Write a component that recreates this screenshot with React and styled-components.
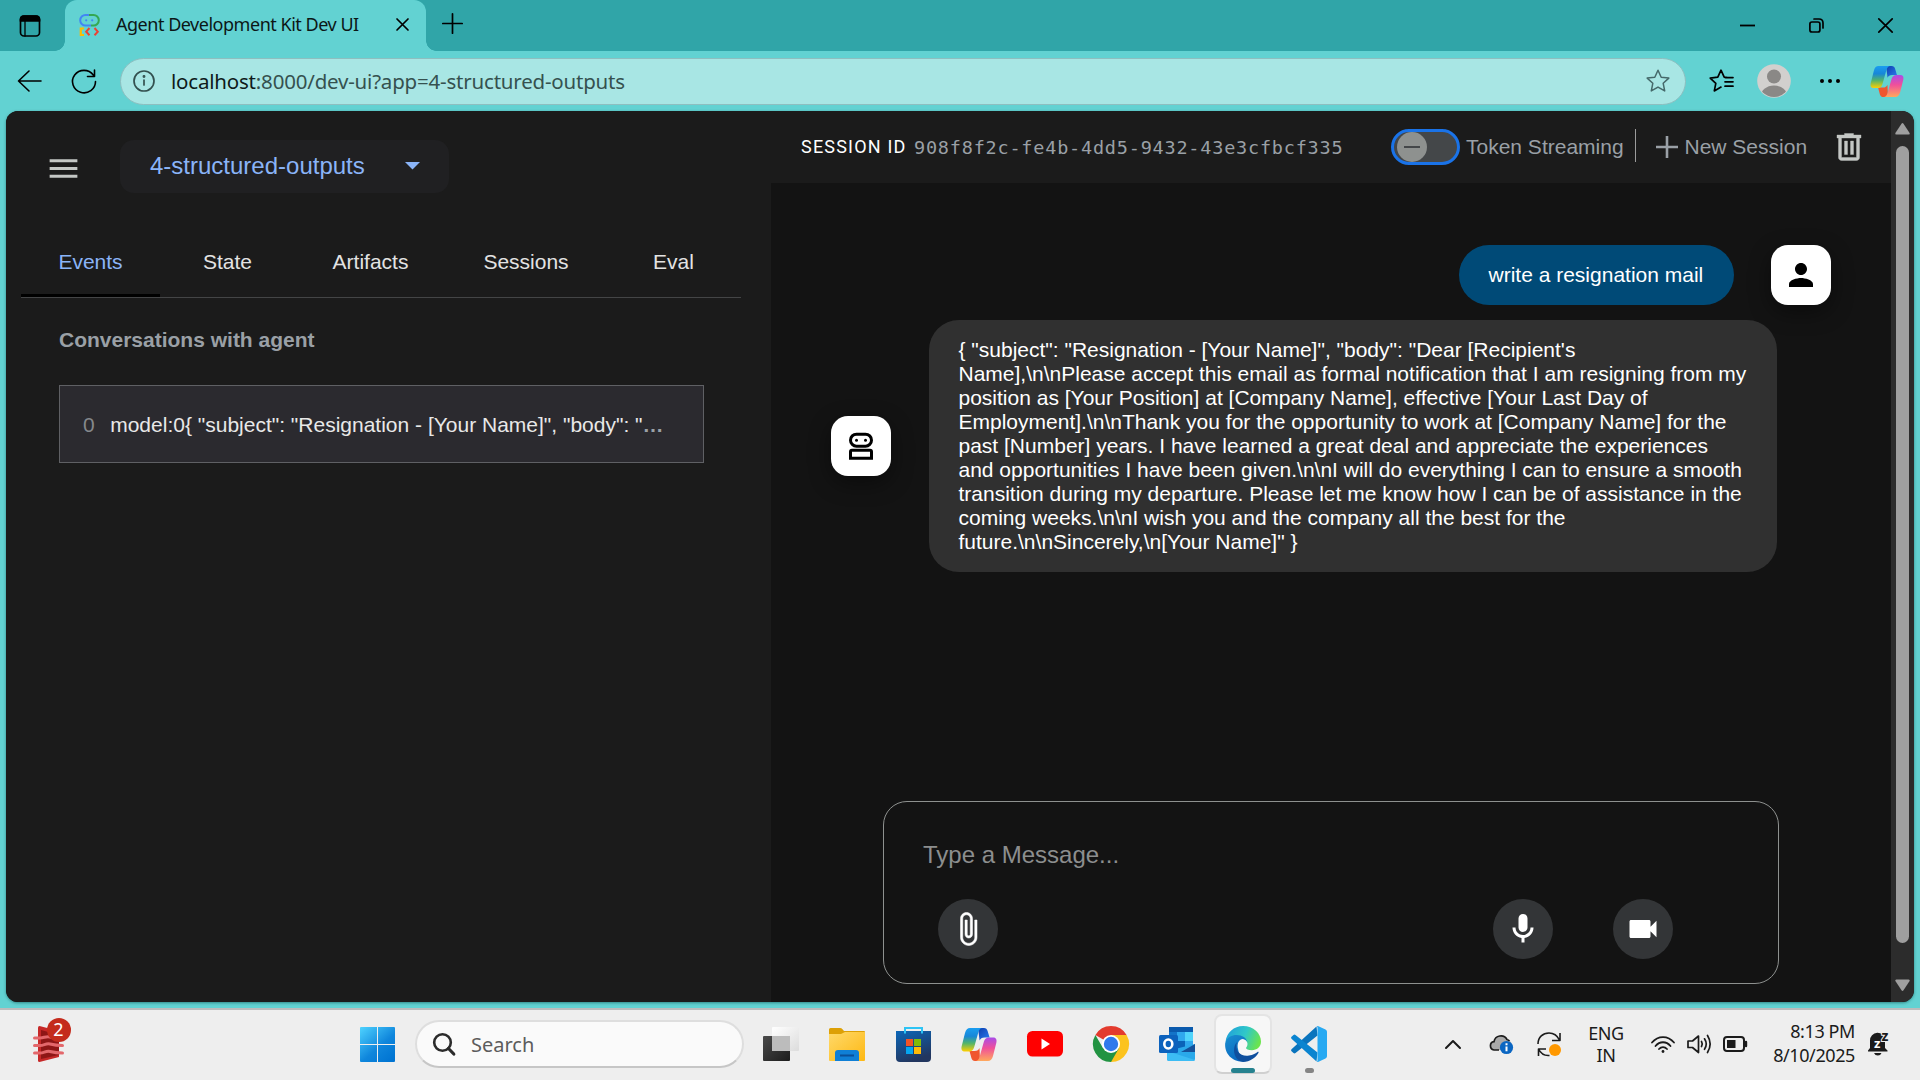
import React from "react";
import styled, { createGlobalStyle, css } from "styled-components";

const Global = createGlobalStyle`
  * { box-sizing: border-box; }
  html, body { margin: 0; padding: 0; }
  body { width: 1920px; height: 1080px; overflow: hidden; background: #62d2d2; }
  svg { display: block; flex: none; overflow: visible; }
`;

const ui = `"Noto Sans", "Open Sans", sans-serif`;
const arial = `"Liberation Sans", Arial, sans-serif`;

const Screen = styled.div`
  width: 1920px;
  height: 1080px;
  display: flex;
  flex-direction: column;
  background: #62d2d2;
  font-family: ${arial};
`;

/* ---------- browser chrome ---------- */
const TabStrip = styled.div`
  height: 51px;
  flex: none;
  display: flex;
  align-items: center;
  background: #30a5a8;
  padding: 0 27px 0 19px;
`;
const Tab = styled.div`
  position: relative;
  display: flex;
  align-items: center;
  width: 361px;
  height: 51px;
  margin-left: 24px;
  padding: 0 17px 2px 14px;
  background: #62d2d2;
  border-radius: 12px 12px 0 0;
  &::before, &::after {
    content: "";
    position: absolute;
    bottom: 0;
    width: 10px;
    height: 10px;
  }
  &::before { left: -10px; background: radial-gradient(circle at 0 0, transparent 9.5px, #62d2d2 10px); }
  &::after { right: -10px; background: radial-gradient(circle at 100% 0, transparent 9.5px, #62d2d2 10px); }
`;
const TabTitle = styled.span`
  flex: 1;
  margin: 0 0 2px 16px;
  font: 400 18px/24px ${ui};
  letter-spacing: -0.48px;
  color: #0c1717;
  white-space: nowrap;
`;
const NewTab = styled.div`
  margin: 0 auto 4px 16px;
`;
const WindowButtons = styled.div`
  display: flex;
  gap: 54px;
`;
const Toolbar = styled.div`
  height: 60px;
  flex: none;
  display: flex;
  align-items: center;
  padding: 0 16px 0 17px;
`;
const Reload = styled.div`
  margin: 0 23px 0 29px;
`;
const AddressBar = styled.div`
  display: flex;
  align-items: center;
  width: 1566px;
  height: 47px;
  padding: 0 15px 0 12px;
  border: 1px solid #8dbfc0;
  border-radius: 24px;
  background: #a8e6e4;
`;
const Url = styled.span`
  flex: 1;
  margin: 0 0 1px 16px;
  font: 400 20.5px/28px ${ui};
  letter-spacing: -0.2px;
  color: #35514f;
  white-space: nowrap;
  b { font-weight: 400; color: #0e1a1a; }
`;
const ToolIcons = styled.div`
  flex: 1;
  display: flex;
  align-items: center;
  justify-content: space-between;
  margin-left: 23px;
  & > :nth-child(2) { margin: 0 2px 0 -3px; }
  & > :nth-child(3) { margin: 0 4px 0 0; }
`;

/* ---------- page ---------- */
const Page = styled.div`
  height: 891px;
  flex: none;
  margin: 0 6px;
  display: flex;
  border-radius: 12px;
  overflow: hidden;
  background: #131313;
  box-shadow: 0 1px 3px rgba(0, 60, 60, 0.5);
`;
const SidePanel = styled.aside`
  width: 765px;
  flex: none;
  background: #1b1b1b;
`;
const SideTop = styled.div`
  display: flex;
  align-items: center;
  height: 110px;
  padding: 0 0 0 39px;
  & > svg { margin-top: 4px; }
`;
const AppSelect = styled.div`
  display: flex;
  align-items: center;
  justify-content: space-between;
  width: 329px;
  height: 53px;
  margin-left: 38px;
  padding: 0 29px 0 30px;
  border-radius: 14px;
  background: #202022;
  color: #8ab4f8;
  font-size: 24px;
`;
const Tabs = styled.nav`
  display: flex;
  height: 77px;
  margin-left: 15px;
  width: 720px;
  border-bottom: 1px solid #444546;
`;
const TabItem = styled.div`
  width: ${(p) => p.$w}px;
  height: 76px;
  padding: 29px 0 0;
  text-align: center;
  font-size: 21px;
  line-height: 24px;
  color: ${(p) => (p.$active ? "#8ab4f8" : "#e3e3e3")};
  border-bottom: 3px solid ${(p) => (p.$active ? "#000" : "transparent")};
`;
const SectionTitle = styled.h2`
  margin: 30px 0 0 53px;
  font-size: 21px;
  line-height: 24px;
  font-weight: 700;
  color: #9aa0a6;
`;
const EventRow = styled.div`
  display: flex;
  align-items: center;
  width: 645px;
  height: 78px;
  margin: 33px 0 0 53px;
  padding: 1px 23px 0;
  gap: 15.5px;
  border: 1px solid #5f6064;
  background: #2b2a2f;
  font-size: 21px;
  color: #85888c;
  white-space: nowrap;
  span { color: #e8e8e8; }
  i { font-style: normal; font-weight: 700; color: #9aa0a6; }
`;
const Main = styled.main`
  width: 1120px;
  flex: none;
  display: flex;
  flex-direction: column;
`;
const SessionBar = styled.header`
  display: flex;
  align-items: center;
  height: 72px;
  padding: 0 24px 0 30px;
  background: #1b1b1b;
  color: #9aa0a6;
  font-size: 21px;
`;
const SessionLabel = styled.span`
  font: 400 18px/24px Roboto, sans-serif;
  letter-spacing: 1.2px;
  color: #fff;
  white-space: nowrap;
  width: 113px;
`;
const SessionId = styled.span`
  width: 477px;
  margin-top: 1px;
  font: 400 18.5px/24px "DejaVu Sans Mono", monospace;
  letter-spacing: 0.79px;
`;
const Toggle = styled.div`
  width: 69px;
  height: 36px;
  border: 3px solid #1a73e8;
  border-radius: 18px;
  background: #444749;
  padding-left: 3px;
`;
const Knob = styled.div`
  display: flex;
  align-items: center;
  justify-content: center;
  width: 30px;
  height: 30px;
  border-radius: 50%;
  background: #8e918f;
  &::after { content: ""; width: 16px; height: 2px; background: #444749; }
`;
const BarText = styled.span`
  width: ${(p) => p.$w}px;
  margin-left: ${(p) => p.$ml}px;
  white-space: nowrap;
`;
const Divider = styled.div`
  width: 1px;
  height: 33px;
  background: #9b9b9b;
  margin: 0 20px 3px 10px;
`;
const TrashWrap = styled.div`
  margin-left: auto;
`;
const Chat = styled.section`
  flex: 1;
  display: flex;
  flex-direction: column;
  padding-top: 62px;
`;
const MessageRow = styled.div`
  display: flex;
  align-items: center;
  ${(p) =>
    p.$user
      ? css`gap: 37px; justify-content: flex-end; padding-right: 60px;`
      : css`gap: 38px; padding-left: 60px; margin-top: 15px;`}
`;
const Avatar = styled.div`
  display: flex;
  align-items: center;
  justify-content: center;
  width: 60px;
  height: 60px;
  flex: none;
  border-radius: 17px;
  background: #fff;
  box-shadow: 0 7px 22px rgba(0, 0, 0, 0.42);
`;
const Bubble = styled.div`
  border-radius: 30px;
  padding: 18px 29.5px;
  font-size: 21px;
  line-height: 24px;
  color: #fff;
  white-space: nowrap;
  background: ${(p) => (p.$user ? "#004a77" : "#303030")};
  width: ${(p) => p.$w}px;
`;
const Composer = styled.div`
  width: 896px;
  height: 183px;
  margin: auto 0 18px 112px;
  border: 1px solid #8e918f;
  border-radius: 24px;
  padding: 39px 105px 0 39px;
`;
const Placeholder = styled.div`
  font-size: 24px;
  line-height: 28px;
  color: #8c8e8e;
`;
const ComposerActions = styled.div`
  display: flex;
  align-items: center;
  gap: 60px;
  margin: 30px 0 0 15px;
`;
const RoundButton = styled.div`
  display: flex;
  align-items: center;
  justify-content: center;
  width: 60px;
  height: 60px;
  border-radius: 50%;
  background: #333537;
  margin-right: ${(p) => (p.$push ? "auto" : 0)};
`;
const ScrollBar = styled.div`
  width: 23px;
  display: flex;
  flex-direction: column;
  align-items: center;
  justify-content: space-between;
  padding: 12px 0 11px;
  background: #2c2c2c;
`;
const Thumb = styled.div`
  width: 13px;
  height: 797px;
  margin-bottom: 26px;
  border-radius: 7px;
  background: #9f9f9f;
`;

/* ---------- taskbar ---------- */
const Taskbar = styled.footer`
  height: 72px;
  margin-top: 6px;
  padding-bottom: 2px;
  flex: none;
  display: flex;
  align-items: center;
  border-top: 2px solid #bcbcbc;
  background: #eeeeee;
  font-family: ${ui};
  color: #1b1b1b;
`;
const Widget = styled.div`
  position: relative;
  width: 31px;
  margin: 0 296px 1px 33px;
`;
const Badge = styled.div`
  position: absolute;
  left: 13.5px;
  top: -8px;
  width: 24px;
  height: 24px;
  border-radius: 50%;
  background: #c42b1c;
  color: #fff;
  font: 400 18px/23px ${ui};
  text-align: center;
`;
const SearchBox = styled.div`
  display: flex;
  align-items: center;
  width: 329px;
  height: 48px;
  margin: 0 4px 0 20px;
  padding: 1px 0 0 16px;
  gap: 16px;
  border: 2px solid #dedede;
  border-bottom-color: #c6c6c6;
  border-radius: 24px;
  background: #fafafa;
  font: 400 20px/28px ${ui};
  color: #5c5c5c;
`;
const AppSlot = styled.div`
  position: relative;
  width: 66px;
  height: 70px;
  display: flex;
  align-items: center;
  justify-content: center;
`;
const ActiveTile = styled.div`
  display: flex;
  align-items: center;
  justify-content: center;
  width: 58px;
  height: 60px;
  border: 2px solid #e4e4e4;
  border-bottom-color: #d0d0d0;
  border-radius: 8px;
  background: #f7f7f7;
`;
const Indicator = styled.div`
  position: absolute;
  bottom: 6px;
  left: calc(50% - ${(p) => p.$w / 2}px);
  width: ${(p) => p.$w}px;
  height: 5px;
  border-radius: 3px;
  background: ${(p) => p.$c};
`;
const Tray = styled.div`
  flex: 1;
  display: flex;
  align-items: center;
  margin-left: 103px;
`;
const TrayItem = styled.div`
  margin-right: ${(p) => p.$mr}px;
`;
const Lang = styled.div`
  width: 36px;
  margin-right: 27px;
  font-size: 18px;
  line-height: 22.5px;
  letter-spacing: -0.4px;
  text-align: center;
`;
const Clock = styled.div`
  width: 108px;
  margin-bottom: 2px;
  font-size: 18px;
  line-height: 24px;
  letter-spacing: -0.4px;
  text-align: right;
  white-space: nowrap;
`;
const BellWrap = styled.div`
  margin-left: 13px;
`;

/* ---------- icons ---------- */
const Stroke = ({ w, h, vb, c = "#000", sw = 1.6, children, cap = "round" }) => (
  <svg width={w} height={h} viewBox={vb || `0 0 ${w} ${h}`} fill="none" stroke={c} strokeWidth={sw} strokeLinecap={cap} strokeLinejoin="round">
    {children}
  </svg>
);
const Mat = ({ d, size = 36, c = "#fff", bold = 0 }) => (
  <svg width={size} height={size} viewBox="0 0 24 24" fill={c} stroke={c} strokeWidth={bold}><path d={d} /></svg>
);

const AdkLogo = () => (
  <svg width="21" height="22" viewBox="0 0 21 22" fill="none" strokeWidth="2">
    <path d="M10 1H6.500a5.300 5.300 0 0 0 0 10.600H12" stroke="#4285f4" />
    <path d="M10 1h4.500a5.300 5.300 0 0 1 0 10.600H12" stroke="#34a853" />
    <circle cx="7.200" cy="6.300" r="1.100" fill="#4285f4" />
    <circle cx="13.200" cy="6.300" r="1.100" fill="#4285f4" />
    <path d="M5 14.500H1.800V21H5" stroke="#fbbc04" strokeWidth="2.200" />
    <path d="M10.500 14l-3.300 3.700 3.300 3.600" stroke="#ea4335" />
    <path d="M15.500 14l3.300 3.700-3.300 3.600" stroke="#ea4335" />
  </svg>
);

const Copilot = ({ w, h, id }) => (
  <svg width={w} height={h} viewBox="0 0 36 33">
    <defs>
      <linearGradient id={id + "a"} x1="0" y1="0" x2="0" y2="1">
        <stop offset="0" stopColor="#1a9df0" /><stop offset=".35" stopColor="#1787d8" /><stop offset=".65" stopColor="#52b46b" /><stop offset="1" stopColor="#ffd000" />
      </linearGradient>
      <linearGradient id={id + "b"} x1="0" y1="0" x2="0" y2="1">
        <stop offset="0" stopColor="#a94be8" /><stop offset=".45" stopColor="#f0509a" /><stop offset="1" stopColor="#ffa95c" />
      </linearGradient>
      <linearGradient id={id + "c"} x1="0" y1="0" x2="1" y2="1">
        <stop offset="0" stopColor="#0f3fae" /><stop offset="1" stopColor="#2a7cf0" />
      </linearGradient>
    </defs>
    <path d="M17 0h6c2 0 3 1 3.600 3l2 6.500h-5c-3 0-4 1-5 3z" fill={`url(#${id}c)`} />
    <path d="M19 33h-5c-2 0-3-1-3.600-3L8.500 23h5c3 0 4-1 5-3z" fill="#f0562f" />
    <path d="M9 0h12c-2 .5-3 2-3.700 4.500L13.500 18c-1 3.800-2.500 5.500-6 5.500H4C1 23.500 0 21.500.6 18.500L4 5C5 1.500 6.500 0 9 0z" fill={`url(#${id}a)`} />
    <path d="M27 33H15c2-.5 3-2 3.700-4.500L22.500 15c1-3.800 2.500-5.500 6-5.500H32c3 0 4 2 3.400 5L32 28c-1 3.500-2.500 5-5 5z" fill={`url(#${id}b)`} />
  </svg>
);

const Folder = () => (
  <svg width="36" height="33" viewBox="0 0 36 33">
    <defs><linearGradient id="fo" x1="0" y1="0" x2="1" y2="1"><stop offset="0" stopColor="#ffd96a" /><stop offset="1" stopColor="#fdb813" /></linearGradient></defs>
    <path d="M0 1.500Q0 0 1.500 0H11q1.500 0 2.500 1.200L15 3h20q1 0 1 1v5H0z" fill="#dda006" />
    <path d="M0 6h12l4-2h20v28q0 1-1 1H1q-1 0-1-1z" fill="url(#fo)" />
    <path d="M6 33v-8q0-3 3-3h18q3 0 3 3v8z" fill="#0f7fd6" />
    <path d="M11 27.500h14" stroke="#0a4f98" strokeWidth="2" />
  </svg>
);
const Store = () => (
  <svg width="35" height="35" viewBox="0 0 35 35">
    <defs><linearGradient id="st" x1="0" y1="0" x2=".4" y2="1"><stop offset="0" stopColor="#0b66b8" /><stop offset="1" stopColor="#22365f" /></linearGradient></defs>
    <path d="M0 4h35v27q0 4-4 4H4q-4 0-4-4z" fill="url(#st)" />
    <path d="M9 6.500V1h17v5.500" fill="none" stroke="#2dc4f5" strokeWidth="2" />
    <path d="M10 12h7v7h-7z" fill="#f35325" /><path d="M18 12h7v7h-7z" fill="#81bc06" />
    <path d="M10 20h7v7h-7z" fill="#05a6f0" /><path d="M18 20h7v7h-7z" fill="#ffba08" />
  </svg>
);
const TaskView = () => (
  <svg width="36" height="34" viewBox="0 0 36 34">
    <defs>
      <linearGradient id="tv" x1="0" y1="0" x2="1" y2="1"><stop offset="0" stopColor="#4a4a4a" /><stop offset="1" stopColor="#1c1c1c" /></linearGradient>
      <linearGradient id="tw" x1="0" y1="0" x2="1" y2="1"><stop offset="0" stopColor="#fff" /><stop offset="1" stopColor="#dcdcdc" /></linearGradient>
    </defs>
    <rect x="9" y="0" width="27" height="24" rx="1" fill="url(#tw)" />
    <rect x="0" y="9" width="27" height="25" rx="1" fill="url(#tv)" />
    <path d="M9 9h18v15H9z" fill="#bcbcbc" />
  </svg>
);
const Youtube = () => (
  <svg width="36" height="26" viewBox="0 0 36 26"><rect width="36" height="25.500" rx="5.500" fill="#f00" /><path d="M14.500 7.500v11l8.500-5.500z" fill="#fff" /></svg>
);
const Chrome = () => (
  <svg width="36" height="36" viewBox="0 0 36 36">
    <path d="M18 18L2.400 9A18 18 0 0 1 33.600 9z" fill="#e33b2e" />
    <path d="M18 18V9h15.600A18 18 0 0 1 18 36z" fill="#fcc31e" />
    <path d="M2.400 9l7.800 13.500L18 18l7.800 4.500L18 36A18 18 0 0 1 2.400 9z" fill="#229342" />
    <circle cx="18" cy="18" r="9" fill="#fff" /><circle cx="18" cy="18" r="7.200" fill="#3079ec" />
  </svg>
);
const Outlook = () => (
  <svg width="36" height="34" viewBox="0 0 36 34">
    <path d="M10 0h24v24H10z" fill="#1373c8" /><path d="M10 0h24v5H10z" fill="#0a5aad" />
    <path d="M18 5h8v9h-8z" fill="#2fa8ee" /><path d="M26 5h8v9h-8z" fill="#50d4fb" />
    <path d="M18 14h8v8h-8z" fill="#0a63b8" /><path d="M26 14h8v8h-8z" fill="#2fa8ee" />
    <path d="M8 24l28-7v15q0 2-2 2H10q-2 0-2-2z" fill="#2aa9ea" /><path d="M36 17v8l-14 0z" fill="#155099" />
    <path d="M8 24l28 9q-1 1-2 1H10q-2 0-2-2z" fill="#3cbcf4" />
    <rect x="0" y="8" width="19" height="18" rx="1.500" fill="#0c62bd" />
    <ellipse cx="9.300" cy="17" rx="4" ry="4.500" fill="none" stroke="#fff" strokeWidth="2.600" />
  </svg>
);
const Edge = () => (
  <svg width="36" height="36" viewBox="0 0 36 36">
    <defs>
      <linearGradient id="e1" x1="0" y1=".2" x2="1" y2=".5"><stop offset="0" stopColor="#1f9fdc" /><stop offset=".55" stopColor="#30c8c8" /><stop offset="1" stopColor="#6be44e" /></linearGradient>
      <linearGradient id="e2" x1="0" y1="0" x2=".5" y2="1"><stop offset="0" stopColor="#1a8fd0" /><stop offset="1" stopColor="#0a68c0" /></linearGradient>
    </defs>
    <path d="M.5 16C1.500 6.500 9 0 18 0c10.500 0 18 7.500 18 15.500 0 5.500-4.500 8.700-9 8.700-4 0-6-1.200-6-2.200 0-.8 1.500-1.500 1.500-4 0-3-2.500-5.500-6-5.500C9 12.500 3 13 .5 16z" fill="url(#e1)" />
    <path d="M.2 17C2 11 7 9 11.500 9c6 0 10 3 10.800 7-1-2-3-3-5-3-4 1-5.300 5-4.300 10 1 7 6 10 9 11.800C11 38-1 30 .2 17z" fill="url(#e2)" />
    <path d="M12 16c-3 9 4 15 12 13.500 4-.5 7-2.500 8.500-3.500.8-.4 1.300.2 1 .8C31 31.500 25 36 18 36c-5-.5-9-6-9-11.500 0-4 1.500-7 3-8.500z" fill="#0f4f9e" />
  </svg>
);
const VsCode = () => (
  <svg width="36" height="36" viewBox="0 0 36 36">
    <path d="M26.500 9.500L4.500 27q-1 .8-2 0L.5 25.200q-1-.9 0-1.900L25.500.5z" fill="#0a74bd" />
    <path d="M26.500 26.500L4.500 9q-1-.8-2 0L.5 10.800q-1 .9 0 1.900L25.500 35.500z" fill="#0a84d0" />
    <path d="M25.500.3Q26.500-.3 27.500.2l7 3.300q1.500.7 1.500 2.300v24.400q0 1.600-1.500 2.300l-7 3.300q-1 .5-2-.1 1 .3 1-1.500V1.800Q26.500 0 25.500.3z" fill="#27a9f2" />
  </svg>
);
const WinLogo = () => (
  <svg width="35" height="35" viewBox="0 0 35 35">
    <defs><linearGradient id="wl" gradientUnits="userSpaceOnUse" x1="0" y1="0" x2="30" y2="35"><stop offset="0" stopColor="#4fd3ff" /><stop offset=".6" stopColor="#0f86dc" /><stop offset="1" stopColor="#0074d2" /></linearGradient></defs>
    <path d="M0 1q0-1 1-1h16v17H0zM18 0h16q1 0 1 1v16H18zM0 18h17v17H1q-1 0-1-1zM18 18h17v16q0 1-1 1H18z" fill="url(#wl)" />
  </svg>
);
const WidgetIcon = () => (
  <svg width="31" height="36" viewBox="0 0 31 36">
    <path d="M5 1.500Q5 0 6.500 0L26 5v26L6.500 36Q5 36 5 34.500z" fill="#c62828" />
    <path d="M8 4l18 5v20L8 33z" fill="#8e1616" />
    <path d="M1.500 12H7c4 0 6-2 10-1s8 1 12 1M1.500 19.500H7c4 0 6-2.500 10-1.500s8 1.500 12.500 1.500M1.500 27H7c4 0 6-2.500 10-1.500s8 1.500 12.500 1.500" stroke="#e3676b" strokeWidth="3" fill="none" strokeLinecap="round" />
  </svg>
);

const LINES = [
  `{ "subject": "Resignation - [Your Name]", "body": "Dear [Recipient's`,
  `Name],\\n\\nPlease accept this email as formal notification that I am resigning from my`,
  `position as [Your Position] at [Company Name], effective [Your Last Day of`,
  `Employment].\\n\\nThank you for the opportunity to work at [Company Name] for the`,
  `past [Number] years. I have learned a great deal and appreciate the experiences`,
  `and opportunities I have been given.\\n\\nI will do everything I can to ensure a smooth`,
  `transition during my departure. Please let me know how I can be of assistance in the`,
  `coming weeks.\\n\\nI wish you and the company all the best for the`,
  `future.\\n\\nSincerely,\\n[Your Name]" }`,
];

const TABS = [["Events", 139], ["State", 135], ["Artifacts", 151], ["Sessions", 160], ["Eval", 135]];
const STAR = "M12 1.200l3.200 7 7.600.9-5.600 5.200 1.500 7.600L12 18.100l-6.700 3.800 1.500-7.600L1.200 9.100l7.600-.9z";

export default function App() {
  return (
    <Screen>
      <Global />
      <TabStrip>
        <Stroke w={22} h={22} sw={1.700}>
          <rect x="1.500" y="1" width="19" height="20" rx="3.500" />
          <path d="M1.500 6V4.500Q1.500 1 5 1h12q3.500 0 3.500 3.500V6z" fill="#000" />
          <path d="M6 6v15" strokeWidth="1.300" />
        </Stroke>
        <Tab>
          <AdkLogo />
          <TabTitle>Agent Development Kit Dev UI</TabTitle>
          <Stroke w={13} h={13} sw={1.700}><path d="M1 1l11 11M12 1L1 12" /></Stroke>
        </Tab>
        <NewTab><Stroke w={21} h={21} sw={1.700}><path d="M10.500 .8v19.400M.8 10.500h19.400" /></Stroke></NewTab>
        <WindowButtons>
          <Stroke w={15} h={15} sw={1.800} cap="butt"><path d="M0 7.500h15" /></Stroke>
          <Stroke w={15} h={15} sw={1.700}><rect x=".9" y="4" width="10" height="10" rx="2" /><path d="M5 1h5q4 0 4 4v5" /></Stroke>
          <Stroke w={15} h={15} sw={1.700}><path d="M.8 .8l13.400 13.400M14.200 .8L.8 14.200" /></Stroke>
        </WindowButtons>
      </TabStrip>

      <Toolbar>
        <Stroke w={25} h={22} sw={1.600}><path d="M24 11H1.500M12 1L1.500 11 12 21" /></Stroke>
        <Reload>
          <Stroke w={26} h={24} sw={1.600}><path d="M24.500 12.500A11.500 11.200 0 1 1 22.300 6M23.500 1v6.500H16.500" /></Stroke>
        </Reload>
        <AddressBar>
          <Stroke w={22} h={22} sw={1.700} c="#33504f"><circle cx="11" cy="11" r="10" /><path d="M11 10v5" /><circle cx="11" cy="6.500" r=".6" fill="#33504f" /></Stroke>
          <Url><b>localhost</b>:8000/dev-ui?app=4-structured-outputs</Url>
          <Stroke w={24} h={24} sw={1.500} c="#45696a"><path d={STAR} /></Stroke>
        </AddressBar>
        <ToolIcons>
          <Stroke w={25} h={24} sw={1.700}>
            <path d="M12 18.100l-6.700 3.800 1.500-7.600L1.200 9.100l7.600-.9L12 1.200l3.200 7 3.500.4M16 12.800h8M16 17.200h8M16 8.600h8" />
          </Stroke>
          <svg width="34" height="34" viewBox="0 0 34 34">
            <clipPath id="av"><circle cx="17" cy="17" r="16" /></clipPath>
            <circle cx="17" cy="17" r="16.800" fill="#d2d0ce" />
            <g clipPath="url(#av)" fill="#8a8886"><circle cx="17" cy="12.500" r="7" /><ellipse cx="17" cy="33" rx="13.500" ry="11.500" /></g>
          </svg>
          <svg width="20" height="4" viewBox="0 0 20 4"><circle cx="2" cy="2" r="2" /><circle cx="10" cy="2" r="2" /><circle cx="18" cy="2" r="2" /></svg>
          <Copilot w={34} h={31} id="t" />
        </ToolIcons>
      </Toolbar>

      <Page>
        <SidePanel>
          <SideTop>
            <Mat d="M3 18h18v-2H3v2zm0-5h18v-2H3v2zm0-7v2h18V6H3z" size={37} c="#c4c7c5" />
            <AppSelect>
              4-structured-outputs
              <svg width="15" height="8" viewBox="0 0 15 8"><path d="M0 0h15L7.500 7.500z" fill="#8ab4f8" /></svg>
            </AppSelect>
          </SideTop>
          <Tabs>
            {TABS.map(([t, w], i) => <TabItem key={t} $w={w} $active={i === 0}>{t}</TabItem>)}
          </Tabs>
          <SectionTitle>Conversations with agent</SectionTitle>
          <EventRow>
            0
            <div><span>model:0{`{ "subject": "Resignation - [Your Name]", "body": "`}</span><i>…</i></div>
          </EventRow>
        </SidePanel>

        <Main>
          <SessionBar>
            <SessionLabel>SESSION ID</SessionLabel>
            <SessionId>908f8f2c-fe4b-4dd5-9432-43e3cfbcf335</SessionId>
            <Toggle><Knob /></Toggle>
            <BarText $w={159} $ml={6}>Token Streaming</BarText>
            <Divider />
            <Stroke w={22} h={22} sw={2.600} c="#9aa0a6" cap="butt"><path d="M11 0v22M0 11h22" /></Stroke>
            <BarText $w={124} $ml={6.5}>New Session</BarText>
            <TrashWrap>
              <Mat size={36} c="#c4c7c5" bold={0.25} d="M7 21c-.55 0-1.020-.2-1.410-.59S5 19.550 5 19V6H4V4h5V3h6v1h5v2h-1v13c0 .55-.2 1.020-.59 1.410S17.550 21 17 21H7zM17 6H7v13h10V6zM9 17h2V8H9v9zm4 0h2V8h-2v9z" />
            </TrashWrap>
          </SessionBar>
          <Chat>
            <MessageRow $user>
              <Bubble $user $w={275}>write a resignation mail</Bubble>
              <Avatar><Mat c="#000" d="M12 12c2.210 0 4-1.790 4-4s-1.790-4-4-4-4 1.790-4 4 1.790 4 4 4zm0 2c-2.670 0-8 1.340-8 4v2h16v-2c0-2.660-5.330-4-8-4z" /></Avatar>
            </MessageRow>
            <MessageRow>
              <Avatar>
                <svg width="36" height="36" viewBox="0 0 24 24" fill="none" stroke="#000" strokeWidth="2">
                  <rect x="5" y="4.100" width="14" height="8" rx="4" />
                  <path d="M5 20.100v-4.300q0-1 1-1h12q1 0 1 1v4.300z" />
                  <circle cx="9" cy="8.100" r="1" fill="#000" stroke="none" /><circle cx="15" cy="8.100" r="1" fill="#000" stroke="none" />
                </svg>
              </Avatar>
              <Bubble $w={848}>{LINES.map((l) => <div key={l}>{l}</div>)}</Bubble>
            </MessageRow>
            <Composer>
              <Placeholder>Type a Message...</Placeholder>
              <ComposerActions>
                <RoundButton $push><Mat bold={0.35} d="M16.500 6v11.500c0 2.210-1.790 4-4 4s-4-1.790-4-4V5c0-1.380 1.120-2.500 2.500-2.500s2.500 1.120 2.500 2.500v10.500c0 .55-.45 1-1 1s-1-.45-1-1V6H10v9.500c0 1.380 1.120 2.500 2.500 2.500s2.500-1.120 2.500-2.500V5c0-2.210-1.790-4-4-4S7 2.790 7 5v12.500c0 3.040 2.460 5.500 5.500 5.500s5.500-2.460 5.500-5.500V6h-1.500z" /></RoundButton>
                <RoundButton><Mat d="M12 14c1.660 0 3-1.340 3-3V5c0-1.660-1.340-3-3-3S9 3.340 9 5v6c0 1.660 1.340 3 3 3zm5-3c0 2.760-2.240 5-5 5s-5-2.240-5-5H5c0 3.530 2.610 6.430 6 6.920V21h2v-3.080c3.390-.49 6-3.390 6-6.920h-2z" /></RoundButton>
                <RoundButton><Mat d="M17 10.500V7c0-.55-.45-1-1-1H4c-.55 0-1 .45-1 1v10c0 .55.45 1 1 1h12c.55 0 1-.45 1-1v-3.500l4 4v-11l-4 4z" /></RoundButton>
              </ComposerActions>
            </Composer>
          </Chat>
        </Main>

        <ScrollBar>
          <svg width="15" height="12" viewBox="0 0 15 12"><path d="M6.500 .8q1-1.400 2 0L14.600 10q.7 1.500-1 1.500H1.400q-1.700 0-1-1.500z" fill="#9f9f9f" /></svg>
          <Thumb />
          <svg width="15" height="12" viewBox="0 0 15 12"><path d="M6.500 11.200q1 1.400 2 0L14.600 2q.7-1.500-1-1.500H1.400q-1.700 0-1 1.500z" fill="#9f9f9f" /></svg>
        </ScrollBar>
      </Page>

      <Taskbar>
        <Widget><WidgetIcon /><Badge>2</Badge></Widget>
        <WinLogo />
        <SearchBox>
          <Stroke w={22} h={23} sw={2.600} c="#2b2b2b"><circle cx="9.500" cy="9.500" r="8.300" /><path d="M15.500 15.500l5.300 5.500" strokeWidth="3.200" /></Stroke>
          Search
        </SearchBox>
        <AppSlot><TaskView /></AppSlot>
        <AppSlot><Folder /></AppSlot>
        <AppSlot><Store /></AppSlot>
        <AppSlot><Copilot w={36} h={33} id="b" /></AppSlot>
        <AppSlot><Youtube /></AppSlot>
        <AppSlot><Chrome /></AppSlot>
        <AppSlot><Outlook /></AppSlot>
        <AppSlot><ActiveTile><Edge /></ActiveTile><Indicator $w={24} $c="#26828f" /></AppSlot>
        <AppSlot><VsCode /><Indicator $w={9} $c="#858585" /></AppSlot>
        <Tray>
          <TrayItem $mr={28}><Stroke w={16} h={9} sw={2} c="#1b1b1b"><path d="M1 8l7-7 7 7" /></Stroke></TrayItem>
          <TrayItem $mr={24}>
            <svg width="24" height="20" viewBox="0 0 24 20">
              <path d="M5 16a4.200 4.200 0 0 1 0-8.300A7 7 0 0 1 18 5.500q4 1 4.500 5V16z" fill="#a9a9a9" />
              <path d="M10 16H5a4.200 4.200 0 0 1 0-8.300A7 7 0 0 1 18 5.500q1.500.3 2.500 1.500" fill="none" stroke="#1b1b1b" strokeWidth="1.700" />
              <circle cx="17.500" cy="13.500" r="6.600" fill="#0b66c2" />
              <path d="M17.500 12.500v4.800M17.500 9.300v1.900" stroke="#fff" strokeWidth="2" />
            </svg>
          </TrayItem>
          <TrayItem $mr={27}>
            <Stroke w={24} h={24} sw={1.600} c="#1b1b1b" cap="butt">
              <path d="M1 12C1 5 6 1 12 1c5 0 8.500 3 10.500 7M23 1v7.500h-8M1.500 24v-7H9M1.500 17c2 4 6 7 11 6.500" />
              <circle cx="18" cy="18" r="6" fill="#ff9800" stroke="none" />
            </Stroke>
          </TrayItem>
          <Lang>ENG<br />IN</Lang>
          <TrayItem $mr={12}>
            <Stroke w={24} h={17} sw={1.800} c="#1b1b1b"><path d="M1 6.500C7-.8 17-.8 23 6.500M4.500 10c4.200-5 10.800-5 15 0M8 13c2.300-2.600 5.700-2.600 8 0" /><circle cx="12" cy="15.500" r="1.400" fill="#1b1b1b" stroke="none" /></Stroke>
          </TrayItem>
          <TrayItem $mr={12}>
            <Stroke w={24} h={20} sw={1.700} c="#1b1b1b"><path d="M1 7v6.500h4.500L11.500 18.500V2L5.500 7zM14.500 7.500q1.500 2.500 0 5M17.500 4.800q3.500 5.300 0 10.500M20.500 1.500q5.300 8.500 0 17" /></Stroke>
          </TrayItem>
          <TrayItem $mr={0}>
            <Stroke w={24} h={16} sw={2} c="#1b1b1b"><rect x="1" y="1" width="20" height="14" rx="3" /><path d="M4 4h8.500v8H4z" fill="#1b1b1b" stroke="none" /><path d="M23 6v4" strokeWidth="2.400" /></Stroke>
          </TrayItem>
          <Clock>8:13 PM<br />8/10/2025</Clock>
          <BellWrap>
            <svg width="22" height="24" viewBox="0 0 22 24">
              <path d="M2 16V8.500a7.500 7.500 0 0 1 15-.5v8l2.500 2.500v1H0v-1z" fill="#1b1b1b" />
              <path d="M6 21h7.500q-1 2.500-3.700 2.500T6 21z" fill="#1b1b1b" />
              <text x="6" y="15.500" fontSize="13" fontWeight="700" fill="#fff" fontFamily="Noto Sans">z</text>
              <text x="13.500" y="9" fontSize="14" fontWeight="700" fill="#1b1b1b" stroke="#eee" strokeWidth="2" paintOrder="stroke" fontFamily="Noto Sans">z</text>
            </svg>
          </BellWrap>
        </Tray>
      </Taskbar>
    </Screen>
  );
}
